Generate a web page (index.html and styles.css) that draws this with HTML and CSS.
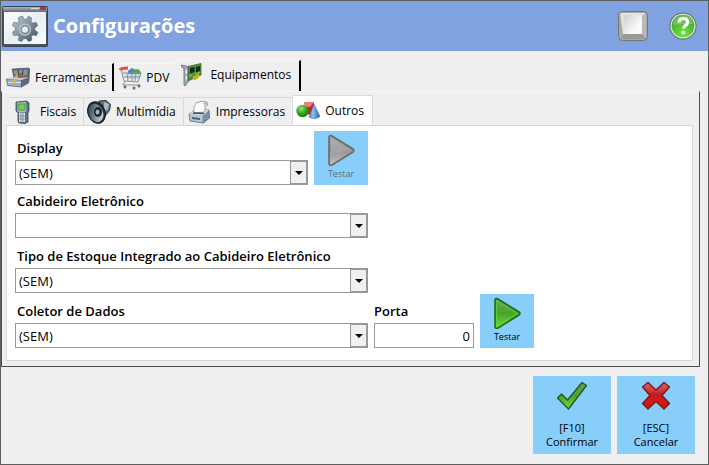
FILE: index.html
```html
<!DOCTYPE html>
<html lang="pt-BR">
<head>
<meta charset="utf-8">
<title>Configurações</title>
<link rel="stylesheet" href="styles.css">
</head>
<body>
<svg class="defs" width="0" height="0" aria-hidden="true">
  <defs>
    <linearGradient id="steel" x1="0" y1="0" x2="1" y2="1"><stop offset="0" stop-color="#c3ccd4"/><stop offset=".5" stop-color="#82909e"/><stop offset="1" stop-color="#3d4b5a"/></linearGradient>
    <linearGradient id="bar" x1="0" y1="0" x2="0" y2="1"><stop offset="0" stop-color="#a9b4be"/><stop offset="1" stop-color="#5f6d7b"/></linearGradient>
    <linearGradient id="paper" x1="0" y1="0" x2="1" y2="1"><stop offset="0" stop-color="#ffffff"/><stop offset=".5" stop-color="#e8eeee"/><stop offset="1" stop-color="#fafcfc"/></linearGradient>
    <linearGradient id="green" x1="0" y1="0" x2="0" y2="1"><stop offset="0" stop-color="#6e9c5d"/><stop offset=".5" stop-color="#4aa52b"/><stop offset="1" stop-color="#6be03a"/></linearGradient>
    <linearGradient id="gray" x1="0" y1="0" x2="0" y2="1"><stop offset="0" stop-color="#a6a6a6"/><stop offset=".5" stop-color="#949494"/><stop offset="1" stop-color="#c0c0c0"/></linearGradient>
    <linearGradient id="red" x1="0" y1="0" x2="0" y2="1"><stop offset="0" stop-color="#d86a6a"/><stop offset=".45" stop-color="#c81e1e"/><stop offset="1" stop-color="#d81111"/></linearGradient>
    <linearGradient id="key" x1="0" y1="0" x2="1" y2="1"><stop offset="0" stop-color="#cfcfcf"/><stop offset=".7" stop-color="#fafafa"/></linearGradient>
    <linearGradient id="cone" x1="0" y1="0" x2="1" y2="0"><stop offset="0" stop-color="#3c7fc0"/><stop offset=".35" stop-color="#8cc4ec"/><stop offset="1" stop-color="#1f5fa4"/></linearGradient>
    <linearGradient id="horn" x1="0" y1="0" x2="1" y2="1"><stop offset="0" stop-color="#26323a"/><stop offset=".5" stop-color="#7d8c96"/><stop offset="1" stop-color="#eef3f5"/></linearGradient>
    <radialGradient id="ball" cx=".4" cy=".3" r=".8"><stop offset="0" stop-color="#9be67a"/><stop offset=".5" stop-color="#35a522"/><stop offset="1" stop-color="#126b0c"/></radialGradient>
    <radialGradient id="help" cx=".5" cy=".85" r=".8"><stop offset="0" stop-color="#6bea3c"/><stop offset="1" stop-color="#3f9c2c"/></radialGradient>
  </defs>
</svg>

<div class="window">
  <header class="header">
    <svg class="app-icon" width="46" height="41" viewBox="0 0 46 41" aria-hidden="true">
      <rect x=".5" y=".5" width="45" height="40" rx="1" fill="#48545f" stroke="#394550"/>
      <rect x="1" y="1" width="44" height="5" fill="url(#bar)"/>
      <rect x="2" y="6" width="42" height="32" fill="url(#paper)"/>
      <path d="M29 2h8v1h-8z" fill="#d4dade"/><path d="M38 1h6v3h-6z" fill="#d02a22"/>
      <g fill="url(#steel)" stroke="#596675" stroke-width=".6">
        <path fill-rule="evenodd" d="M20.500 10l1.300 3.300h2.600l2-3.100 3.200 1.700-.6 3.600 1.700 1.600 3.700-.6 1.200 3.200-2.900 2.200.1 2.200 3 2.200-1.300 3.200-3.600-.5-1.600 1.800.5 3.500-3.300 1.300-2.200-2.900h-2.500l-2.200 2.900-3.200-1.300.6-3.600-1.700-1.700-3.500.4-1.300-3.200 2.900-2.200v-2.300l-3-2.200 1.400-3.200 3.600.6 1.600-1.700-.6-3.600zM23 20a3.600 3.600 0 1 0 0 7.200a3.600 3.600 0 0 0 0-7.200z"/>
        <circle cx="23" cy="23.600" r="5.500" fill="none" stroke="#bdc7d0" stroke-width="1.200"/>
      </g>
    </svg>
    <h1 class="title">Configurações</h1>
    <button class="icon-button" type="button" aria-label="Teclado">
      <svg width="30" height="30" viewBox="0 0 30 30" aria-hidden="true">
        <rect x=".5" y=".5" width="29" height="29" rx="4" fill="#a9a9a9" stroke="#747474"/>
        <path d="M2 2h26l-4 3v18H5z" fill="#e2e2e2"/><path d="M28 3v24l-4-4V5z" fill="#b9b9b9"/><path d="M3 28l3-5h18l4 5z" fill="#9a9a9a"/>
        <rect x="6" y="4" width="18" height="19" rx="2" fill="url(#key)"/>
      </svg>
    </button>
    <button class="icon-button" type="button" aria-label="Ajuda">
      <svg width="28" height="28" viewBox="0 0 28 28" aria-hidden="true">
        <circle cx="14" cy="14" r="13.500" fill="#4f6a4e"/><circle cx="14" cy="14" r="12.600" fill="#dce8d8"/><circle cx="14" cy="14" r="11.300" fill="url(#help)"/>
        <path d="M4 13a10 10 0 0 1 20-1q-9 0-20 1z" fill="#a1cd91" opacity=".5"/>
        <path d="M10 10.500q0-4 4.300-4t4.300 3.700q0 2-2.200 3.400-1.800 1.200-1.800 3" fill="none" stroke="#fff" stroke-width="3.200"/><circle cx="14.300" cy="20.500" r="2" fill="#fff"/>
      </svg>
    </button>
  </header>

  <nav class="tabs" aria-label="Seções">
    <button class="tab tab-marked" type="button">
      <svg width="24" height="24" viewBox="0 0 24 24" aria-hidden="true">
        <path d="M6 3l16-1 2 1-1 8-15 1z" fill="#5a6670" stroke="#465158" stroke-width=".6"/><path d="M7.500 4.500l14-1-.5 6-12.500 1z" fill="#8a949b"/>
        <path d="M6 13l3-5 3 1 3-2 4 2 2 3-6 2z" fill="#7b6a4a"/><path d="M8 11l3-3 2 1-2 3zM14 10l2-2 2 2z" fill="#f0a030"/><path d="M12 4l1 6M17 4l-1 6" stroke="#33424e"/>
        <path d="M.5 13l15 1v7l-14-1.500z" fill="#9fb0c0" stroke="#566472" stroke-width=".8"/><path d="M15.500 14l8-3-1 6-7 4z" fill="#5b6c7d" stroke="#46535f" stroke-width=".6"/>
        <path d="M1 13l4-2 10 1 8-1-7.500 3z" fill="#c6d1da"/><path d="M2 16.500h13" stroke="#d3dde5"/><rect x="7" y="14" width="2.500" height="3" fill="#e0b82c"/>
      </svg>
      <span>Ferramentas</span>
    </button>
    <button class="tab tab-cart" type="button">
      <svg width="24" height="24" viewBox="0 0 24 24" aria-hidden="true">
        <path d="M1 2l7-1 2 3 1 8H4z" fill="#eee3df"/><path d="M9 5l4-3 4 2v8H9z" fill="#3c86ce"/><path d="M14 4l5-1 3 3-2 7h-6z" fill="#4cae35"/><path d="M9 8h12l-1 5H9z" fill="#cbdce9"/>
        <path d="M1 4q1-2 8-2" fill="none" stroke="#e5512e" stroke-width="3"/>
        <path d="M2 3l3 12 14 1 3-9H4m1 4h16M8 7l1 8m4-8v8m4-8l-1 8M6 15l-2 4h17" fill="none" stroke="#85919b"/>
        <circle cx="6" cy="21" r="1.500" fill="#666e76"/><circle cx="15" cy="22" r="1.500" fill="#666e76"/><circle cx="20" cy="20" r="1.500" fill="#666e76"/>
      </svg>
      <span>PDV</span>
    </button>
    <button class="tab tab-card tab-current tab-marked" type="button" aria-current="true">
      <svg width="24" height="24" viewBox="0 0 24 24" aria-hidden="true">
        <path d="M7 3.500L20 .5v11.500L7 18z" fill="#4f9136" stroke="#2d571b" stroke-width=".7"/><path d="M9 5l4.500-1v5L9 10.500zM15 4l4-1v5l-4 1.500z" fill="#1c2623"/><path d="M8 13l3-1M14 11l5-2" stroke="#9bcc66"/>
        <path d="M12 13.500l6-2.500v4l-6 2.500z" fill="#e3c62d"/><path d="M14 13v4m2-5v4" stroke="#8e7318" stroke-width=".7"/>
        <path d="M.5 2L5 3l2 1v15l-3 4-1-1V5L.5 4z" fill="#a3b1bc" stroke="#566572" stroke-width=".8"/><path d="M4.500 6.500l1.500.5v4l-1.500-.5zM4.500 13l1.500.5v3L4.500 16z" fill="#eaf1f4"/>
      </svg>
      <span>Equipamentos</span>
    </button>
  </nav>

  <main class="pane">
    <nav class="subtabs" aria-label="Equipamentos">
      <button class="subtab" type="button">
        <svg width="24" height="24" viewBox="0 0 24 24" aria-hidden="true">
          <path d="M5 2l11-1 2 2v8l-1 2v9l-3 1.500-6-.5-1-1V13l-2-2z" fill="#5f7186" stroke="#3b4a59" stroke-width=".8"/><path d="M6 2.500l9-.5.500 9-2 1.500H8L6 11z" fill="#a9b8c6"/><rect x="7" y="4" width="7" height="6" fill="#6ed04a" stroke="#3f7d33" stroke-width=".6"/>
          <path d="M8 13h6v9H8z" fill="#dbe4eb"/><path d="M10 13v9m2-9v9M8 16h6M8 19h6" stroke="#607183" stroke-width=".7"/>
        </svg>
        <span>Fiscais</span>
      </button>
      <button class="subtab" type="button">
        <svg width="24" height="24" viewBox="0 0 24 24" aria-hidden="true">
          <path d="M12 1l7-.5 4.500 4-1 6L13 22z" fill="#64747f" stroke="#293740"/><path d="M17 2l5 2-1 5-4 3z" fill="#a9b8c1"/>
          <ellipse cx="9.500" cy="12.500" rx="8.500" ry="11" transform="rotate(-22 9.500 12.500)" fill="#26323a" stroke="#111b22"/><ellipse cx="9" cy="13" rx="7" ry="9.500" transform="rotate(-22 9 13)" fill="url(#horn)"/>
          <ellipse cx="11" cy="12" rx="4" ry="5" fill="#1b252c"/><ellipse cx="10.500" cy="12" rx="2" ry="2.500" fill="#a5b4bd"/>
        </svg>
        <span>Multimídia</span>
      </button>
      <button class="subtab" type="button">
        <svg width="24" height="24" viewBox="0 0 24 24" aria-hidden="true">
          <path d="M2 14l6-4h14l.5 8-6 5L3 21z" fill="#7d91a2" stroke="#51677a" stroke-width=".8"/><path d="M2.500 14.500l13 1v7L3.500 20.500z" fill="#b7c7d4"/><path d="M2 14l6-4h14l-6 5.500z" fill="#dde6ed"/>
          <path d="M7 13q-1-7 2-10 5-3 11-1-3 4-2 10z" fill="#fff" stroke="#8b9298" stroke-width=".8"/><path d="M16 4q3-3 5-.5.500 2-3 3" fill="#c9cfd3" stroke="#8b9298" stroke-width=".7"/><path d="M5 17l8 1v2l-8-1z" fill="#4a6074"/><path d="M6 13l11 .5" stroke="#334b62" stroke-width="1.500"/>
        </svg>
        <span>Impressoras</span>
      </button>
      <button class="subtab subtab-current" type="button" aria-current="true">
        <svg width="24" height="24" viewBox="0 0 24 24" aria-hidden="true">
          <path d="M8 3h10l-1 11-5 2z" fill="#c9202a"/><path d="M8 3h10l-4 5H9z" fill="#f07c7c"/>
          <path d="M18 5l6 12.500q-5 4-11 .5z" fill="url(#cone)" stroke="#2b69a8" stroke-width=".5"/><circle cx="6.500" cy="12" r="6.200" fill="url(#ball)"/>
        </svg>
        <span>Outros</span>
      </button>
    </nav>

    <form class="panel">
      <div class="row row-first">
        <div class="field field-short">
          <label for="display">Display</label>
          <div class="select"><select id="display"><option>(SEM)</option></select><span class="arrow"></span></div>
        </div>
        <button class="test" type="button" disabled>
          <svg width="28" height="33" viewBox="0 0 28 33" aria-hidden="true"><path d="M2 3q0-2 3-1l21 13q2 1.500 0 3L5 31q-3 1-3-2z" fill="url(#gray)" stroke="#696969" stroke-width="1.600"/><path d="M4 4l20 12-20 4z" fill="#c5c5c5" opacity=".3"/></svg>
          <span>Testar</span>
        </button>
      </div>
      <div class="row">
        <div class="field">
          <label for="cabideiro">Cabideiro Eletrônico</label>
          <div class="select"><select id="cabideiro"><option></option></select><span class="arrow"></span></div>
        </div>
      </div>
      <div class="row row-compact">
        <div class="field">
          <label for="estoque">Tipo de Estoque Integrado ao Cabideiro Eletrônico</label>
          <div class="select"><select id="estoque"><option>(SEM)</option></select><span class="arrow"></span></div>
        </div>
      </div>
      <div class="row">
        <div class="field">
          <label for="coletor">Coletor de Dados</label>
          <div class="select"><select id="coletor"><option>(SEM)</option></select><span class="arrow"></span></div>
        </div>
        <div class="field field-port">
          <label for="porta">Porta</label>
          <input id="porta" type="text" value="0">
        </div>
        <button class="test" type="button">
          <svg width="28" height="33" viewBox="0 0 28 33" aria-hidden="true"><path d="M2 3q0-2 3-1l21 13q2 1.500 0 3L5 31q-3 1-3-2z" fill="url(#green)" stroke="#1c6e10" stroke-width="1.600"/><path d="M3.500 4v25l21-12.500z" fill="none" stroke="#5fd43a" stroke-width=".8"/></svg>
          <span>Testar</span>
        </button>
      </div>
    </form>
  </main>

  <footer class="actions">
    <button class="action" type="button">
      <svg width="32" height="30" viewBox="0 0 32 30" aria-hidden="true"><path d="M1.500 17l4-4 6 6L26 1.500l4.500 3L12.500 28z" fill="url(#green)" stroke="#26551b" stroke-width="1.300" stroke-linejoin="round"/></svg>
      <span>[F10]<br>Confirmar</span>
    </button>
    <button class="action" type="button">
      <svg width="30" height="30" viewBox="0 0 30 30" aria-hidden="true"><path d="M1.500 6L7 1.500l8 7.500 8-7.500L28.500 6 21 14.500l7.500 8-5.500 5.500-8-7.500L7 28l-5.500-5.500 7.500-8z" fill="url(#red)" stroke="#7c1515" stroke-width="1.300" stroke-linejoin="round"/></svg>
      <span>[ESC]<br>Cancelar</span>
    </button>
  </footer>
</div>
</body>
</html>
```
FILE: styles.css
```css
* { box-sizing: border-box; }

body {
  margin: 0;
  font-family: "Open Sans", "Noto Sans", sans-serif;
  font-size: 13px;
  line-height: 18px;
  color: #000;
  background: #efefef;
}

button, input, select { font: inherit; color: inherit; margin: 0; }
button { border: 0; padding: 0; background: none; }
svg { display: block; flex: none; }
.defs { position: absolute; }

.window {
  min-height: 100vh;
  border: 1px solid #5f5f5f;
  background: #efefef;
}

.header {
  display: flex;
  align-items: center;
  height: 50px;
  padding: 0 11px 0 1px;
  background: #80a2e0;
}

.title {
  flex: 1;
  margin: 0;
  padding-left: 5px;
  font-size: 20px;
  line-height: 28px;
  font-weight: 700;
  color: #fff;
}

.icon-button + .icon-button { margin-left: 21px; }

.tabs {
  display: flex;
  align-items: flex-end;
  gap: 2px;
  padding: 9px 3px 0;
}

.tab {
  display: flex;
  align-items: center;
  gap: 5px;
  height: 28px;
  padding: 0 6px 0 2px;
  border-top: 1px solid #f6f6f6;
  font-size: 12px;
}

.tab-marked { border-right: 2px solid #000; }
.tab-cart { gap: 3px; padding-left: 3px; }
.tab-card { padding-left: 4px; }
.tab-current { height: 31px; padding-right: 8px; padding-bottom: 3px; }

.pane {
  margin-right: 8px;
  padding: 3px 6px 5px 4px;
  border: 1px solid #4d4d4d;
  border-top-color: #f6f6f6;
}

.subtabs {
  display: flex;
  align-items: flex-end;
  padding-left: 2px;
}

.subtab {
  display: flex;
  align-items: center;
  gap: 5px;
  height: 28px;
  padding: 0 7px 0 3px;
  border-top: 1px solid #dadada;
  border-right: 1px solid #dadada;
  font-size: 12px;
}

.subtab-current {
  height: 30px;
  padding-right: 8px;
  background: #fff;
}

.panel {
  padding: 5px 8px 12px;
  border: 1px solid #d5d5d5;
  background: #fff;
}

.row {
  display: flex;
  align-items: flex-end;
  gap: 6px;
  margin-bottom: 9px;
}

.row-first { margin-bottom: 7px; }
.row-compact { margin-bottom: 1px; }
.row:last-child { margin-bottom: 0; }

.field { display: grid; gap: 3px; width: 353px; }
.field-short { width: 293px; }
.field-port { width: 100px; }

label { padding-left: 2px; font-weight: 600; }
.field-port label { padding-left: 0; }

.select { position: relative; }

select, input {
  display: block;
  width: 100%;
  height: 25px;
  padding: 0 3px;
  border: 1px solid #999;
  border-radius: 0;
  background: #fff;
  appearance: none;
}

input { text-align: right; }

.arrow {
  position: absolute;
  top: 1px;
  right: 1px;
  bottom: 1px;
  width: 17px;
  border: 1px solid #999;
  background: #f0f0f0;
  pointer-events: none;
}

.arrow::after {
  content: "";
  position: absolute;
  top: 9px;
  left: 4px;
  border: 4px solid transparent;
  border-top-color: #000;
  border-bottom: 0;
}

.test {
  display: flex;
  flex-direction: column;
  align-items: center;
  width: 54px;
  height: 54px;
  padding-top: 3px;
  background: #87cefa;
  font-size: 9px;
  line-height: 14px;
}

.test:disabled { color: #5f6d78; }

.actions {
  display: flex;
  justify-content: flex-end;
  gap: 6px;
  padding: 9px 13px 10px;
}

.action {
  display: flex;
  flex-direction: column;
  align-items: center;
  gap: 10px;
  width: 78px;
  height: 78px;
  padding-top: 5px;
  background: #87cefa;
  font-size: 11px;
  line-height: 14px;
}
```
